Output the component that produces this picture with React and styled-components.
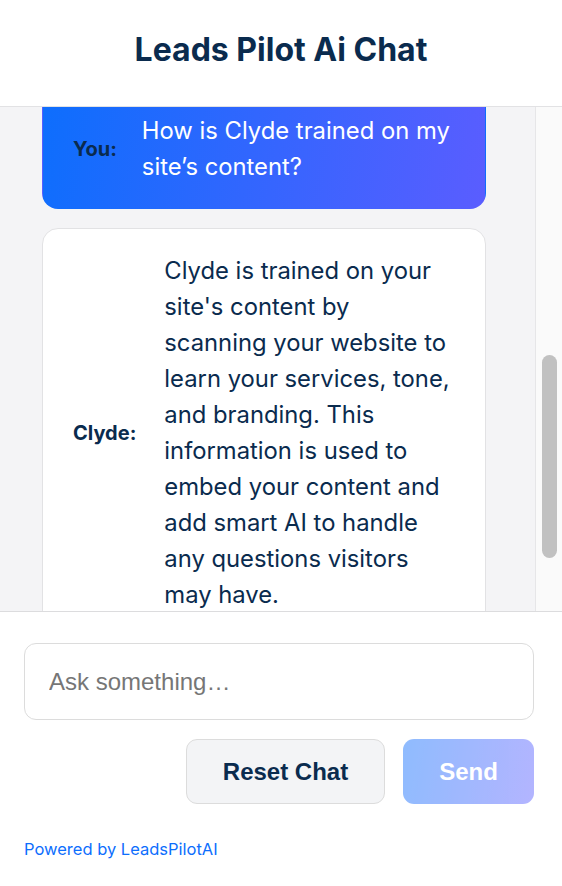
import React, { useLayoutEffect, useRef, useState } from 'react';
import styled, { createGlobalStyle } from 'styled-components';

const GlobalStyle = createGlobalStyle`
  html, body {
    margin: 0;
    padding: 0;
    background: #ffffff;
  }
  body {
    font-family: Inter, "Noto Sans", sans-serif;
  }
  * {
    box-sizing: border-box;
  }
`;

const messages = [
  {
    id: 1,
    from: 'Clyde',
    text: "Hi there! I'm Clyde. Ask me anything about Leads Pilot AI.",
  },
  {
    id: 2,
    from: 'You',
    text: 'What is Leads Pilot AI?',
  },
  {
    id: 3,
    from: 'Clyde',
    text: 'Leads Pilot AI adds a smart chat assistant to your website that answers visitors around the clock and captures leads for you.',
  },
  {
    id: 4,
    from: 'You',
    text: 'How is Clyde trained on my site’s content?',
  },
  {
    id: 5,
    from: 'Clyde',
    text: "Clyde is trained on your site's content by scanning your website to learn your services, tone, and branding. This information is used to embed your content and add smart AI to handle any questions visitors may have.",
  },
];

export default function App() {
  const listRef = useRef(null);
  const anchorRef = useRef(null);
  const [thumb, setThumb] = useState({ top: 0, height: 0 });

  useLayoutEffect(() => {
    // keep the last question just under the header, like the live widget
    const list = listRef.current;
    const anchor = anchorRef.current;
    if (!list || !anchor) return;
    list.scrollTop = anchor.offsetTop - list.offsetTop + 19;

    const rail = list.clientHeight;
    setThumb({
      top: (list.scrollTop / list.scrollHeight) * rail,
      height: (list.clientHeight / list.scrollHeight) * rail,
    });
  }, []);

  return (
    <>
      <GlobalStyle />
      <Widget>
        <Header>
          <Title>Leads Pilot Ai Chat</Title>
        </Header>

        <Conversation>
          <MessageList ref={listRef}>
            {messages.map((m) => (
              <Bubble
                key={m.id}
                $mine={m.from === 'You'}
                ref={m.id === 4 ? anchorRef : null}
              >
                <Label>{m.from}:</Label>
                <Text $mine={m.from === 'You'}>{m.text}</Text>
              </Bubble>
            ))}
            <Spacer />
          </MessageList>
          <ScrollRail>
            <Thumb style={{ marginTop: thumb.top, height: thumb.height }} />
          </ScrollRail>
        </Conversation>

        <Footer>
          <Input placeholder="Ask something…" />
          <Actions>
            <ResetButton>Reset Chat</ResetButton>
            <SendButton disabled>Send</SendButton>
          </Actions>
          <Powered href="#">Powered by LeadsPilotAI</Powered>
        </Footer>
      </Widget>
    </>
  );
}

const Widget = styled.div`
  width: 562px;
  height: 886px;
  display: flex;
  flex-direction: column;
  background: #ffffff;
  overflow: hidden;
`;

const Header = styled.header`
  height: 107px;
  flex-shrink: 0;
  display: flex;
  align-items: center;
  justify-content: center;
  padding-bottom: 8px;
  border-bottom: 1px solid #e2e2e4;
`;

const Title = styled.h1`
  margin: 0;
  font-size: 32px;
  font-weight: 700;
  color: #0a2b4e;
`;

const Conversation = styled.div`
  flex: 1;
  min-height: 0;
  display: flex;
  background: #f4f4f6;
`;

const MessageList = styled.div`
  flex: 1;
  overflow-y: scroll;
  scrollbar-width: none;
  padding: 29px 49px 0 42px;
  display: flex;
  flex-direction: column;
  gap: 19px;

  &::-webkit-scrollbar {
    display: none;
  }
`;

const ScrollRail = styled.div`
  width: 27px;
  flex-shrink: 0;
  background: #fafafa;
  border-left: 1px solid #e6e6e8;
  padding: 0 5px 0 6px;
`;

const Thumb = styled.div`
  width: 15px;
  border-radius: 8px;
  background: #c1c1c1;
`;

const Bubble = styled.div`
  flex-shrink: 0;
  display: flex;
  align-items: center;
  gap: ${(p) => (p.$mine ? 25 : 28)}px;
  padding: 24px 31px 23px 30px;
  border-radius: 16px;
  background: ${(p) =>
    p.$mine ? 'linear-gradient(100deg, #0d6efd 0%, #5a5dff 100%)' : '#ffffff'};
  border: 1px solid ${(p) => (p.$mine ? 'transparent' : '#e2e2e4')};
`;

const Label = styled.span`
  flex-shrink: 0;
  font-size: 20px;
  font-weight: 700;
  color: #0a2b4e;
`;

const Text = styled.p`
  flex: 1;
  margin: 0;
  font-size: 23.8px;
  line-height: 36px;
  color: ${(p) => (p.$mine ? '#ffffff' : '#0a2b4e')};
`;

const Spacer = styled.div`
  flex-shrink: 0;
  height: 85px;
`;

const Footer = styled.footer`
  flex-shrink: 0;
  height: 275px;
  border-top: 1px solid #dcdcde;
  padding: 31px 28px 0 24px;
  display: flex;
  flex-direction: column;
`;

const Input = styled.input`
  height: 77px;
  width: 100%;
  padding: 0 24px;
  border: 1px solid #dcdcdc;
  border-radius: 12px;
  font-family: "Liberation Sans", Arial, sans-serif;
  font-size: 24px;
  color: #333;
  outline: none;

  &::placeholder {
    color: #767676;
  }
`;

const Actions = styled.div`
  display: flex;
  justify-content: flex-end;
  gap: 18px;
  margin-top: 19px;
`;

const BaseButton = styled.button`
  height: 65px;
  border-radius: 11px;
  font-family: "Liberation Sans", Arial, sans-serif;
  font-size: 24px;
  font-weight: 700;
  cursor: pointer;
`;

const ResetButton = styled(BaseButton)`
  width: 199px;
  background: #f3f4f6;
  border: 1px solid #dcdcdc;
  color: #0a2b4e;
`;

const SendButton = styled(BaseButton)`
  width: 131px;
  border: none;
  color: #ffffff;
  background: linear-gradient(100deg, #0d6efd 0%, #5a5dff 100%);

  &:disabled {
    opacity: 0.46;
    cursor: default;
  }
`;

const Powered = styled.a`
  margin-top: 35px;
  align-self: flex-start;
  font-size: 16.5px;
  line-height: 20px;
  color: #0d6efd;
  text-decoration: none;
`;
